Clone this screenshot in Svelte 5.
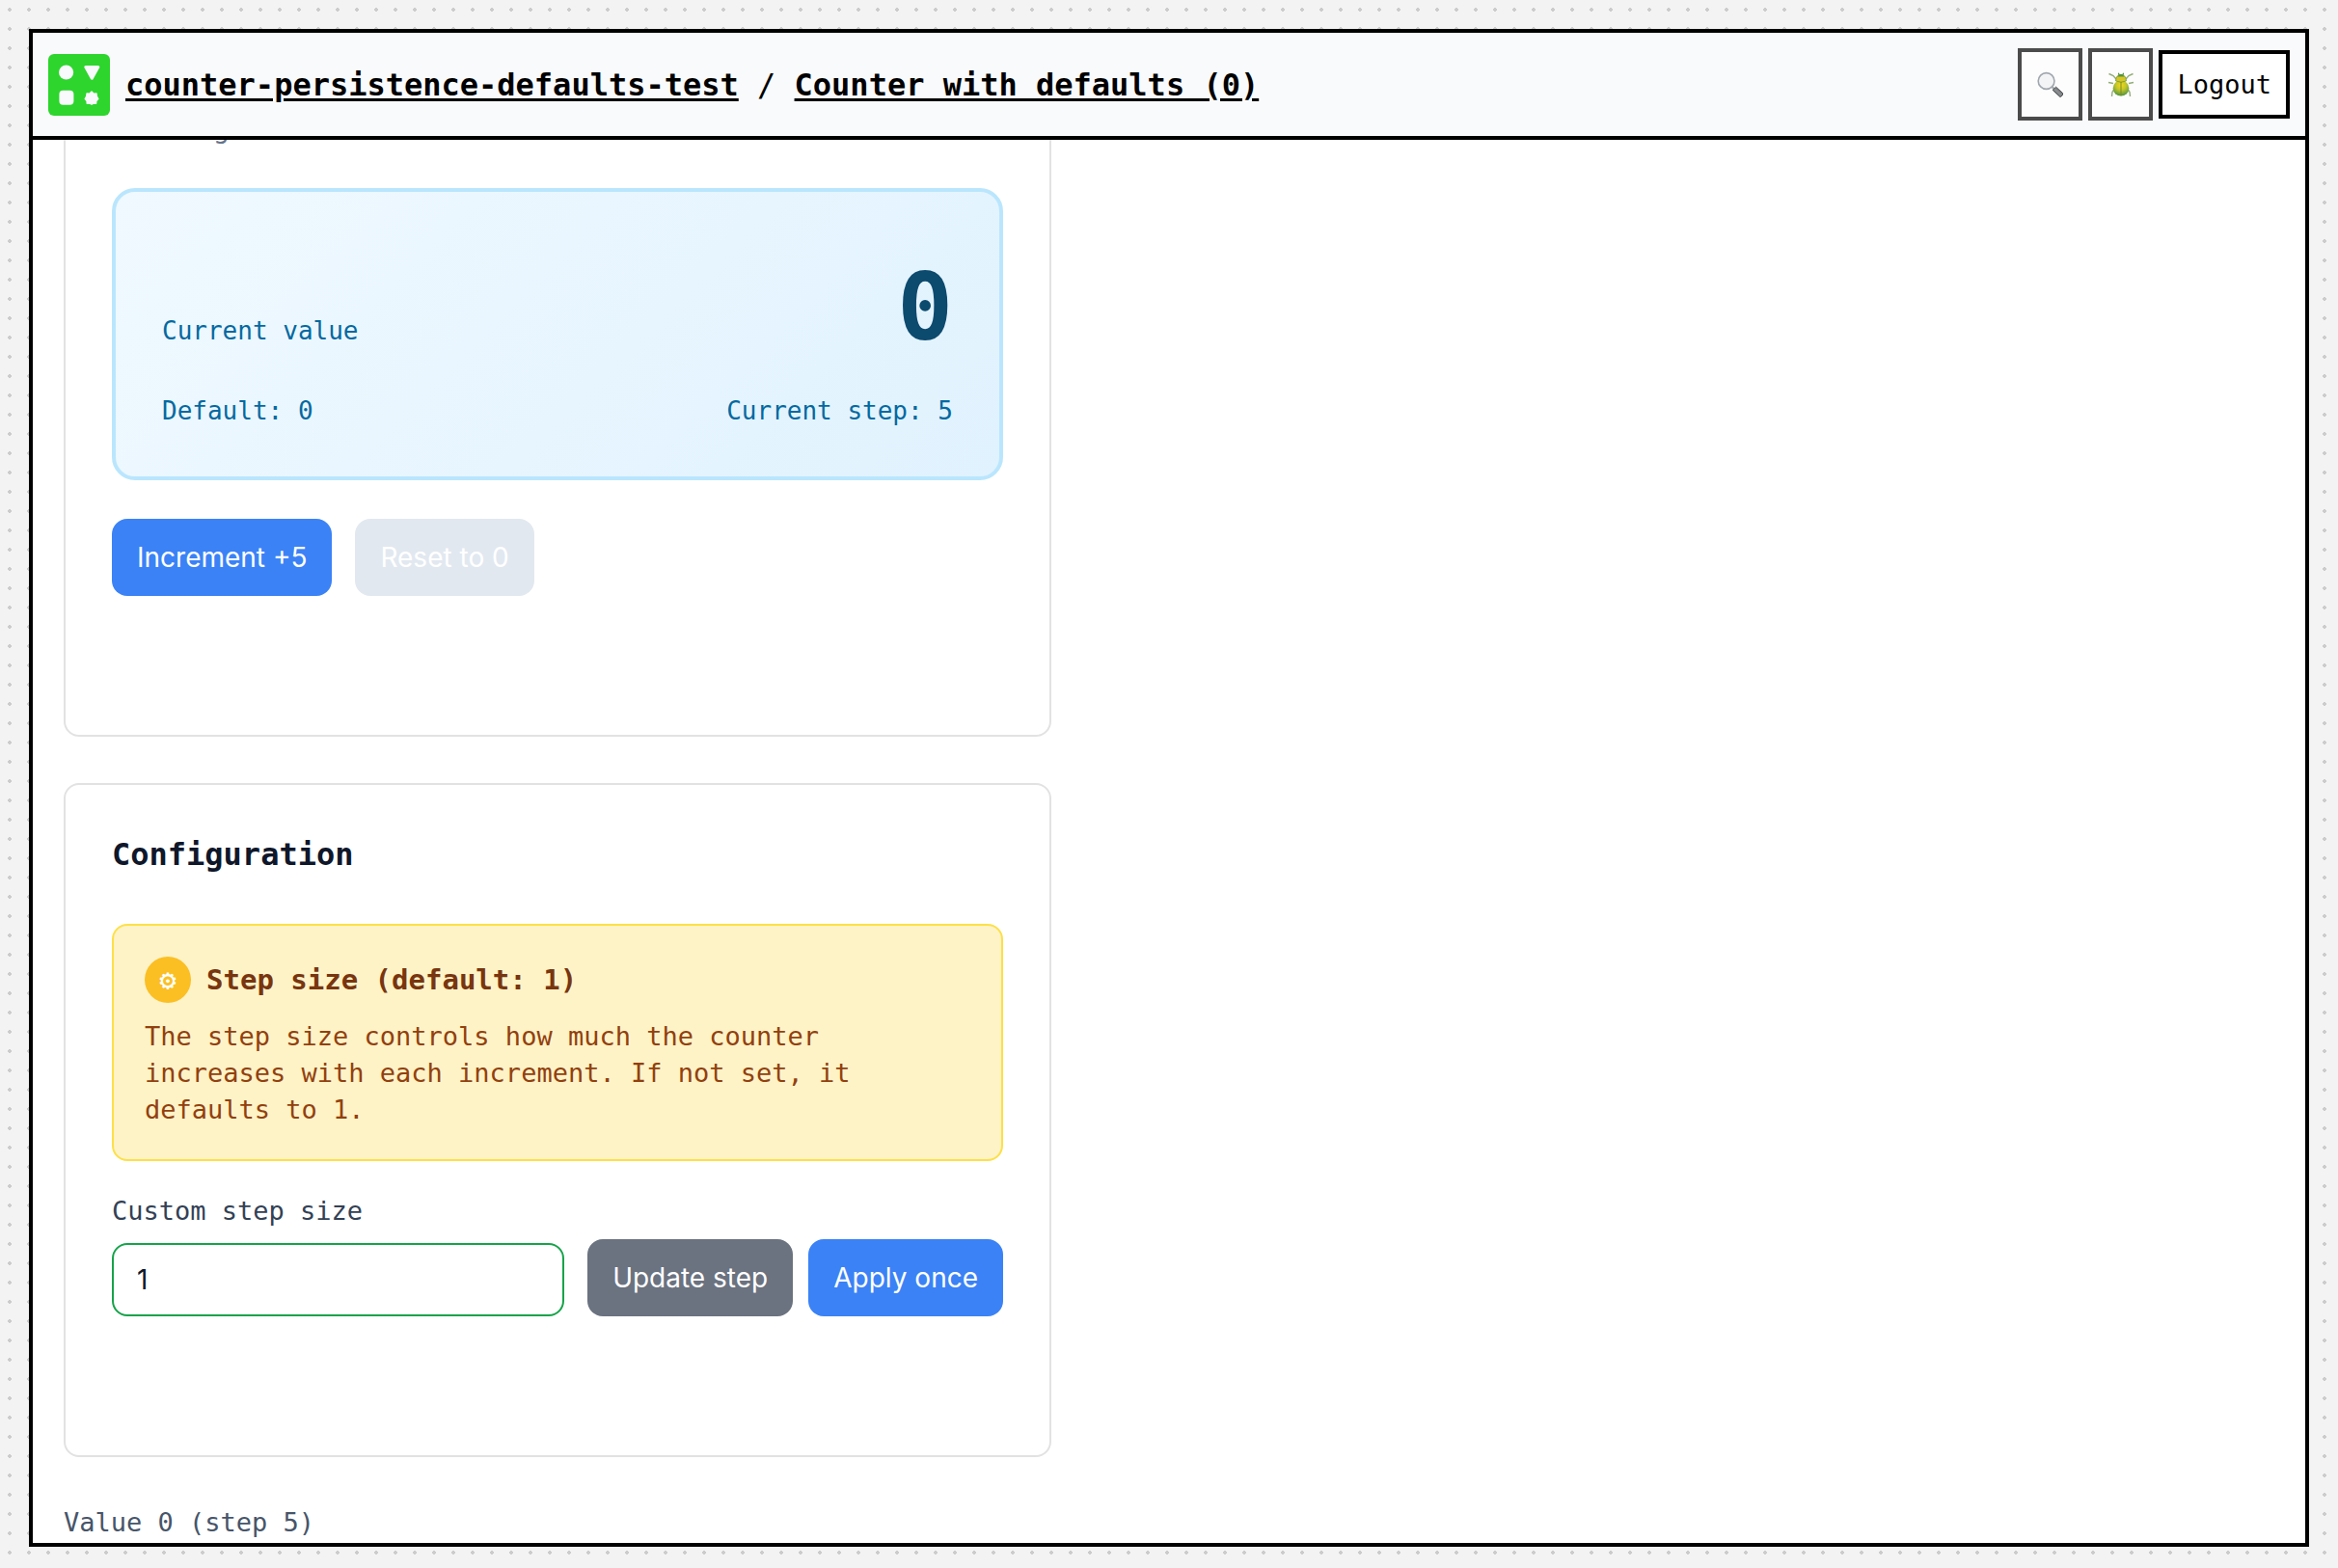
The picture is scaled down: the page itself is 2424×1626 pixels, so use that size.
<script>
  let value = $state(0);
  let step = $state(5);
  let custom = $state('1');

  function increment() {
    value += step;
  }
  function reset() {
    value = 0;
  }
  function updateStep() {
    step = Number(custom) || 1;
  }
  function applyOnce() {
    value += Number(custom) || 1;
  }

  // Opens the view partway down its content.
  function scrolled(node) {
    node.scrollTop = 114;
  }
</script>

<div class="page">
  <div class="window">
    <header>
      <svg class="logo" viewBox="0 0 64 64" aria-hidden="true">
        <rect width="64" height="64" rx="6" fill="#2dd52d" />
        <g fill="#f9fafc" stroke="#f9fafc" stroke-linejoin="round">
          <circle cx="18.6" cy="19" r="7.6" stroke="none" />
          <path d="M38.800 13.500h13L45.300 25.200z" stroke-width="3" />
          <rect x="11.400" y="37.800" width="15" height="15" rx="4" stroke="none" />
          <path
            d="M45 39L47.200 41.200 50 41 50.300 43.900 51.800 46.600 49.800 48.700 49.600 51.300 46.800 51.100 45 52.200 43 51.100 40.200 51.300 40.100 48.700 38.200 46.600 39.700 43.900 40 41 42.800 41.200z"
            stroke-width="1.400"
          />
        </g>
      </svg>
      <nav>
        <a href="#app">counter-persistence-defaults-test</a> / <a href="#piece">Counter with defaults (0)</a>
      </nav>
      <div class="tools">
        <button class="tool" aria-label="Inspect">
          <svg viewBox="0 0 28 28" aria-hidden="true">
            <defs>
              <linearGradient id="handle" x1="0" y1="1" x2="1" y2="0">
                <stop offset="0" stop-color="#4a4d50" />
                <stop offset="0.5" stop-color="#8d9093" />
                <stop offset="1" stop-color="#4a4d50" />
              </linearGradient>
            </defs>
            <path d="M15.500 16l3 3" stroke="#a8abae" stroke-width="2.400" />
            <path d="M16.200 19.400l3.400-3.200 7 6.400q.8 2.400-2.600 4z" fill="url(#handle)" stroke="#4a4d50" />
            <circle cx="9.600" cy="10" r="8.400" fill="#f3f4f5" stroke="#a0a7ae" stroke-width="1.600" />
          </svg>
        </button>
        <button class="tool" aria-label="Debug">
          <svg viewBox="0 0 28 28" aria-hidden="true">
            <defs>
              <radialGradient id="shell" cx="0.5" cy="0.300" r="0.700">
                <stop offset="0" stop-color="#f4d91c" />
                <stop offset="0.450" stop-color="#c3c62a" />
                <stop offset="1" stop-color="#4f9440" />
              </radialGradient>
            </defs>
            <g fill="none" stroke="#93ad78" stroke-width="1.400">
              <path d="M9 8L6 4.500 1.500 2.500M19 8l3-3.500 4.500-2M6 12.500L1 11.500M22 12.500l5-1M6.500 19L5 21.500 4.500 26M21.500 19l1.500 2.500.5 4.500" />
            </g>
            <path d="M12.200 4l-.8-2.200M15.800 4l.8-2.200" stroke="#4f8a35" stroke-width="1.200" />
            <ellipse cx="14" cy="17.500" rx="8.300" ry="8" fill="url(#shell)" />
            <path d="M8.600 10q-.2-6 5.400-6.400 5.600.4 5.400 6.400-5.400 2.400-10.800 0z" fill="#d8c425" stroke="#669b38" stroke-width="0.800" />
            <path d="M10.600 5.600q.8-2.600 3.400-2.800 2.600.2 3.400 2.800z" fill="#4f9440" />
            <path d="M14 11v14.200" stroke="#7a8a20" stroke-width="1" />
          </svg>
        </button>
        <button class="logout">Logout</button>
      </div>
    </header>

    <main {@attach scrolled}>
      <section class="card">
        <p class="lead">Testing</p>
        <div class="display">
          <div class="row">
            <span>Current value</span>
            <output>{value}</output>
          </div>
          <div class="row">
            <span>Default: 0</span>
            <span>Current step: {step}</span>
          </div>
        </div>
        <div class="actions">
          <button class="btn primary" onclick={increment}>Increment +{step}</button>
          <button class="btn" onclick={reset} disabled={value === 0}>Reset to 0</button>
        </div>
      </section>

      <section class="card">
        <h2>Configuration</h2>
        <div class="note">
          <div class="note-head">
            <span class="gear">⚙</span>
            <h3>Step size (default: 1)</h3>
          </div>
          <p>The step size controls how much the counter increases with each increment. If not set, it defaults to 1.</p>
        </div>
        <div class="form">
          <div class="field">
            <label for="step">Custom step size</label>
            <input id="step" type="text" inputmode="numeric" bind:value={custom} />
          </div>
          <div class="pair">
            <button class="btn secondary" onclick={updateStep}>Update step</button>
            <button class="btn primary" onclick={applyOnce}>Apply once</button>
          </div>
        </div>
      </section>

      <p class="summary">Value {value} (step {step})</p>
    </main>
  </div>
</div>

<style>
  :global(body) {
    margin: 0;
  }
  .page,
  .page * {
    box-sizing: border-box;
  }
  .page {
    height: 100vh;
    padding: 30px 30px 22px;
    background: #f3f3f3 radial-gradient(circle at 10px 10px, #ccc 2px, transparent 2px) 0 0 / 20px 20px;
    font-family: 'DejaVu Sans Mono', monospace;
    font-size: 27px;
    color: #000;
  }
  h2,
  h3,
  p {
    margin: 0;
  }
  button,
  input {
    font: inherit;
    margin: 0;
  }
  .window {
    display: flex;
    flex-direction: column;
    height: 100%;
    border: 4px solid #000;
    background: #fff;
  }
  header {
    display: flex;
    align-items: center;
    gap: 16px;
    padding: 16px;
    background: #f9fafc;
    border-bottom: 4px solid #000;
  }
  .logo {
    width: 64px;
    height: 64px;
  }
  nav {
    flex: 1;
    font-size: 32px;
    line-height: 40px;
    white-space: nowrap;
  }
  nav a {
    color: #000;
    font-weight: 700;
    text-decoration: underline 3px;
    text-underline-offset: 3px;
  }
  .tools {
    display: flex;
    align-items: center;
    gap: 6px;
  }
  .tool {
    display: grid;
    place-items: center;
    width: 67px;
    height: 75px;
    padding: 0;
    background: #fdfdfe;
    border: 4px solid #4b4b4c;
  }
  .tool svg {
    width: 28px;
    height: 28px;
  }
  .logout {
    height: 71px;
    padding: 0 15px;
    color: #000;
    background: #fff;
    border: 4px solid #000;
  }
  main {
    flex: 1;
    min-height: 0;
    padding: 32px;
    overflow-y: auto;
    scrollbar-width: none;
  }
  .card {
    max-width: 1024px;
    margin-bottom: 48px;
    padding: 48px;
    border: 2px solid #e2e2e2;
    border-radius: 16px;
  }
  .card h2 {
    font-size: 32px;
    line-height: 48px;
    color: #0f172a;
  }
  .lead {
    font-size: 29px;
    line-height: 40px;
    color: #64748b;
  }
  .display {
    display: flex;
    flex-direction: column;
    gap: 16px;
    margin: 42px 0 40px;
    padding: 48px;
    border: 4px solid #bae6fd;
    border-radius: 24px;
    background: linear-gradient(135deg, #f0f9ff, #e0f2fe);
    color: #0369a1;
    font-size: 26px;
    line-height: 39px;
  }
  .row {
    display: flex;
    justify-content: space-between;
    align-items: baseline;
  }
  output {
    font-size: 96px;
    line-height: 144px;
    font-weight: 700;
    color: #0c4a6e;
  }
  .actions {
    display: flex;
    gap: 24px;
    margin-bottom: 96px;
  }
  .btn {
    height: 80px;
    padding: 0 26px;
    border: 0;
    border-radius: 16px;
    font-family: Inter, sans-serif;
    font-size: 28px;
    color: #fff;
    white-space: nowrap;
  }
  .btn:disabled {
    background: #e2e8f0;
  }
  .primary {
    background: #3b82f6;
  }
  .secondary {
    background: #6b7280;
  }
  .note {
    margin: 48px 0 32px;
    padding: 32px;
    border: 2px solid #fde047;
    border-radius: 16px;
    background: #fef3c7;
    line-height: 38px;
    color: #92400e;
  }
  .note-head {
    display: flex;
    align-items: center;
    gap: 16px;
    margin-bottom: 16px;
  }
  .gear {
    display: grid;
    place-items: center;
    width: 48px;
    height: 48px;
    border-radius: 50%;
    background: #fbbf24;
    color: #fff;
    font-size: 29px;
  }
  h3 {
    font-size: 29px;
    color: #78350f;
  }
  .form {
    display: flex;
    align-items: flex-end;
    gap: 24px;
    margin-bottom: 96px;
  }
  .field {
    display: flex;
    flex: 1;
    flex-direction: column;
    gap: 13px;
    min-width: 0;
  }
  label {
    line-height: 40px;
    color: #334155;
  }
  input {
    width: 100%;
    height: 76px;
    padding: 0 24px;
    border: 2px solid #16a34a;
    border-radius: 16px;
    background: #fff;
    color: #0f172a;
    font-family: Inter, sans-serif;
    font-size: 28px;
  }
  .pair {
    display: flex;
    gap: 16px;
  }
  .summary {
    line-height: 40px;
    color: #475569;
  }
</style>
